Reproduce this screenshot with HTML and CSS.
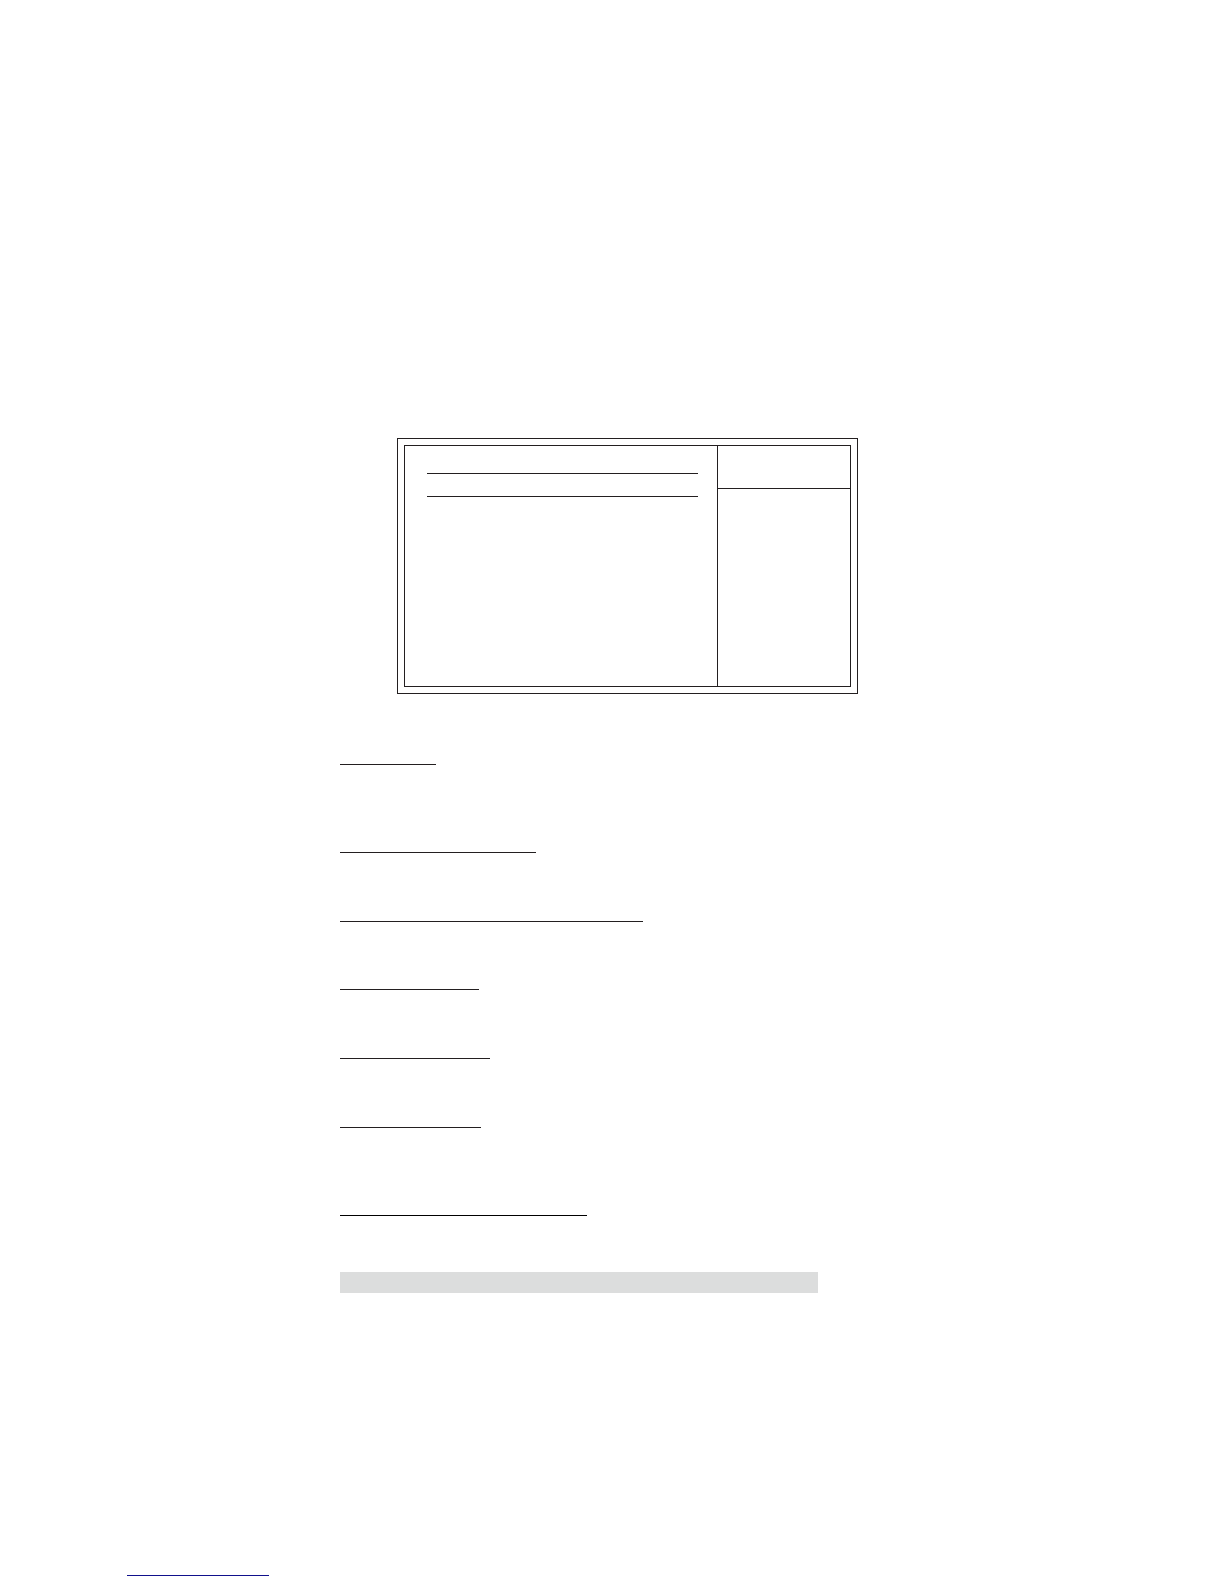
FILE: index.html
```html
<!DOCTYPE html>
<html lang="en">
<head>
  <meta charset="utf-8">
  <meta name="viewport" content="width=device-width, initial-scale=1">
  <title>Setup</title>
  <link rel="stylesheet" href="styles.css">
</head>
<body>
  <main class="container">
    <!-- Double frame with the main panel and the side panel -->
    <div class="frame">
      <div class="screen">
        <div class="panel">
          <hr class="panel-rule">
          <hr class="panel-rule">
        </div>
        <div class="side">
          <div class="side-head"></div>
        </div>
      </div>
    </div>

    <!-- One rule per item -->
    <section class="item item-tall"><hr class="rule rule-1"></section>
    <section class="item"><hr class="rule rule-2"></section>
    <section class="item item-short"><hr class="rule rule-3"></section>
    <section class="item"><hr class="rule rule-4"></section>
    <section class="item"><hr class="rule rule-5"></section>
    <section class="item item-tall"><hr class="rule rule-6"></section>
    <section class="item item-last"><hr class="rule rule-7"></section>

    <div class="band"></div>
  </main>

  <footer class="footer">
    <hr class="footer-rule">
  </footer>
</body>
</html>
```

FILE: styles.css
```css
* {
  box-sizing: border-box;
}

body {
  margin: 0;
  background-color: #fff;
  font-family: "Liberation Sans", Arial, sans-serif;
}

hr {
  height: 1px;
  margin: 0;
  border: 0;
  background-color: #231f20;
}

/* Centred column */
.container {
  max-width: 544px;
  margin: 0 auto;
  padding-top: 438px;
}

/* Double frame */
.frame {
  margin: 0 26px 70px 57px;
  padding: 6px;
  border: 1px solid #231f20;
}

.screen {
  display: grid;
  grid-template-columns: 1fr 133px;
  min-height: 242px;
  border: 1px solid #231f20;
}

.panel {
  display: flex;
  flex-direction: column;
  gap: 22px;
  padding: 27px 19px 27px 22px;
}

.side {
  border-left: 1px solid #231f20;
}

.side-head {
  height: 43px;
  border-bottom: 1px solid #231f20;
}

/* Items */
.item {
  min-height: 69px;
}

.item-short {
  min-height: 68px;
}

.item-tall {
  min-height: 88px;
}

.item-last {
  min-height: 57px;
}

.rule {
  max-width: 100%;
}

.rule-1 { width: 96px; }
.rule-2 { width: 196px; }
.rule-3 { width: 303px; }
.rule-4 { width: 139px; }
.rule-5 { width: 150px; }
.rule-6 { width: 141px; }
.rule-7 {
  width: 247px;
  background-color: #000;
}

/* Grey band */
.band {
  height: 21px;
  margin-right: 66px;
  background-color: #dcdddd;
}

/* Footer line */
.footer {
  padding: 282px 127px 8px;
}

.footer-rule {
  width: 142px;
  background-color: #11118c;
}
```
